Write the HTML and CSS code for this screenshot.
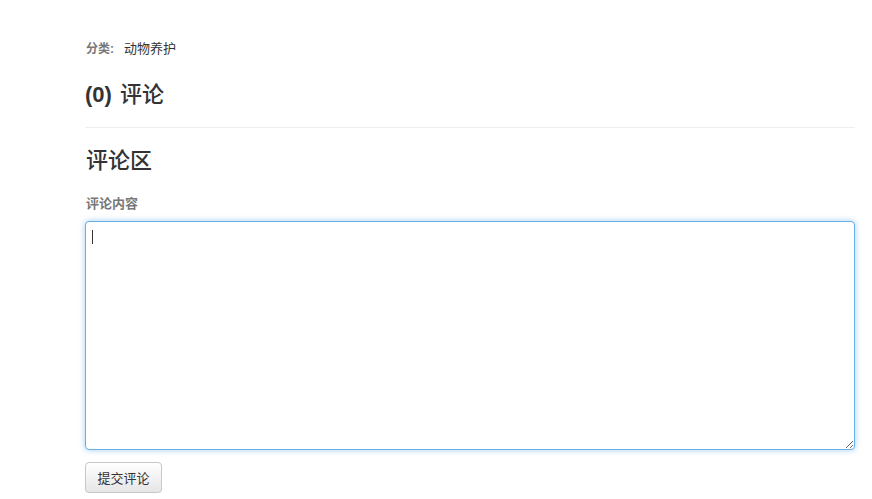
FILE: index.html
```html
<!DOCTYPE html>
<html lang="zh">
<head>
<meta charset="utf-8">
<title>评论</title>
<link rel="stylesheet" href="styles.css">
</head>
<body>
<div class="page">
  <div class="meta"><span class="meta-label">分类:</span><span class="meta-value">动物养护</span></div>
  <h3 class="count">(0) <span class="cjk">评论</span></h3>
  <hr class="divider">
  <h3 class="section-title">评论区</h3>
  <form class="comment-form">
    <label class="field-label" for="content">评论内容</label>
    <div class="textarea-wrap">
      <textarea id="content" class="comment-box"></textarea>
      <span class="caret"></span>
    </div>
    <div class="actions">
      <button type="button" class="btn">提交评论</button>
    </div>
  </form>
</div>
</body>
</html>
```
FILE: styles.css
```css
html, body {
  margin: 0;
  padding: 0;
  background: #fff;
}
body {
  font-family: "Liberation Sans", "Noto Sans CJK SC", sans-serif;
  color: #333;
}
.page {
  width: 770px;
  padding-left: 85px;
  display: flex;
  flex-direction: column;
}
.meta {
  margin-top: 40px;
  font-size: 12px;
  line-height: 18px;
  color: #333;
  display: flex;
  align-items: baseline;
}
.meta-label {
  color: #777;
  font-weight: bold;
  padding-left: 1px;
}
.meta-value {
  font-size: 13px;
  margin-left: 10px;
}
.count {
  margin: 25px 0 0;
  font-size: 22px;
  line-height: 24px;
  font-weight: bold;
  color: #333;
}
.cjk {
  font-weight: 500;
  margin-left: 2px;
}
.divider {
  margin: 20px 0 0;
  border: 0;
  border-top: 1px solid #eee;
  height: 0;
}
.section-title {
  margin: 21px 0 0;
  font-size: 22px;
  line-height: 24px;
  font-weight: 500;
  color: #333;
  padding-left: 1px;
}
.comment-form {
  display: flex;
  flex-direction: column;
  margin-top: 22px;
}
.field-label {
  font-size: 13px;
  line-height: 18px;
  font-weight: bold;
  color: #777;
  padding-left: 1px;
}
.textarea-wrap {
  position: relative;
  margin-top: 8px;
}
.comment-box {
  display: block;
  box-sizing: border-box;
  width: 770px;
  height: 229px;
  margin: 0;
  border: 1px solid #66afe9;
  border-radius: 4px;
  box-shadow: 0 0 6px rgba(102, 175, 233, 0.6);
  outline: none;
  resize: vertical;
  font-family: inherit;
  font-size: 13px;
  padding: 6px;
}
.caret {
  position: absolute;
  left: 7px;
  top: 9px;
  width: 1px;
  height: 14px;
  background: #333;
}
.actions {
  margin-top: 12px;
}
.btn {
  box-sizing: border-box;
  width: 77px;
  height: 31px;
  padding: 0;
  font-family: "Liberation Sans", "Noto Sans CJK SC", sans-serif;
  font-size: 13px;
  color: #333;
  background: linear-gradient(#fff, #e6e6e6);
  border: 1px solid #c8c8c8;
  border-radius: 4px;
  box-shadow: 0 1px 1px rgba(0, 0, 0, 0.05);
}
```
